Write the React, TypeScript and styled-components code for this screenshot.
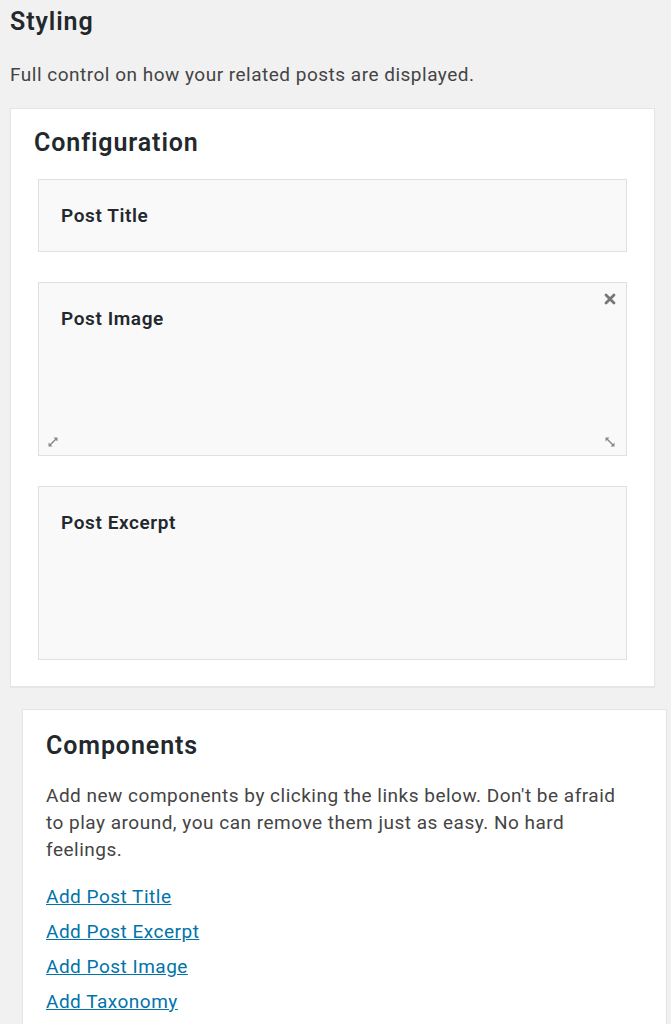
import React from "react";
import styled, { createGlobalStyle } from "styled-components";

const Global = createGlobalStyle`
  html, body { margin: 0; padding: 0; background: #f1f1f1; }
  body { font-family: Roboto, "Noto Sans", "Liberation Sans", sans-serif; color: #444; }
`;

const Page = styled.div`
  padding: 7px 16px 0 10px;
  display: flex;
  flex-direction: column;
`;

const PageTitle = styled.h2`
  margin: 0;
  font-size: 25px;
  font-weight: 600;
  letter-spacing: 0.9px;
  color: #23282d;
  line-height: 30px;
`;

const Lead = styled.p`
  margin: 25px 0 0;
  font-size: 19px;
  letter-spacing: 0.5px;
  line-height: 26px;
  color: #444;
`;

const Panel = styled.section<{ $shift?: number }>`
  background: #fff;
  border: 1px solid #e5e5e5;
  box-shadow: 0 1px 1px rgba(0, 0, 0, 0.04);
  margin-left: ${(p) => p.$shift ?? 0}px;
  margin-right: ${(p) => (p.$shift ? -p.$shift : 0)}px;
`;

const ConfigPanel = styled(Panel)`
  margin-top: 20px;
  padding: 19px 27px 26px 23px;
  display: flex;
  flex-direction: column;
  gap: 30px;
`;

const PanelTitle = styled.h3`
  margin: 0;
  font-size: 25px;
  font-weight: 600;
  letter-spacing: 0.9px;
  color: #23282d;
  line-height: 30px;
`;

const ConfigTitle = styled(PanelTitle)`
  margin-bottom: -9px;
`;

const Block = styled.div<{ $h: number }>`
  position: relative;
  height: ${(p) => p.$h}px;
  margin-left: 4px;
  background: #f9f9f9;
  border: 1px solid #e0e0e0;
  padding: 22px 22px 0;
  box-sizing: border-box;
`;

const BlockLabel = styled.div`
  font-size: 19px;
  font-weight: 600;
  letter-spacing: 0.6px;
  color: #23282d;
  line-height: 28px;
`;

const Corner = styled.span<{ $pos: "tr" | "bl" | "br" }>`
  position: absolute;
  width: 12px;
  height: 12px;
  display: flex;
  ${(p) => (p.$pos === "tr" ? "top: 10px; right: 10px;" : "")}
  ${(p) => (p.$pos === "bl" ? "bottom: 7px; left: 8px;" : "")}
  ${(p) => (p.$pos === "br" ? "bottom: 7px; right: 10px;" : "")}
`;

const ComponentsPanel = styled(Panel)`
  margin-top: 22px;
  padding: 21px 38px 40px 23px;
  min-height: 340px;
`;

const Body = styled.p`
  margin: 21px 0 0;
  font-size: 19px;
  letter-spacing: 0.5px;
  line-height: 27px;
  color: #444;
`;

const Links = styled.div`
  margin-top: 20px;
  display: flex;
  flex-direction: column;
  gap: 7px;
`;

const AddLink = styled.a`
  font-size: 19px;
  letter-spacing: 0.5px;
  line-height: 28px;
  color: #0073aa;
  text-decoration: underline;
  cursor: pointer;
  align-self: flex-start;
`;

const CloseIcon = () => (
  <svg width="12" height="12" viewBox="0 0 12 12">
    <path d="M2 2 L10 10 M10 2 L2 10" stroke="#777" strokeWidth="2.8" strokeLinecap="round" />
  </svg>
);

const ResizeIcon = ({ flip }: { flip?: boolean }) => (
  <svg width="12" height="12" viewBox="0 0 12 12" style={flip ? { transform: "scaleX(-1)" } : undefined}>
    <path d="M3 9 L9 3" stroke="#888" strokeWidth="1.4" />
    <path d="M1.5 10.5 L1.5 6.5 L5.5 10.5 Z" fill="#888" />
    <path d="M10.5 1.5 L10.5 5.5 L6.5 1.5 Z" fill="#888" />
  </svg>
);

export default function App() {
  return (
    <>
      <Global />
      <Page>
        <PageTitle>Styling</PageTitle>
        <Lead>Full control on how your related posts are displayed.</Lead>
        <ConfigPanel>
          <ConfigTitle>Configuration</ConfigTitle>
          <Block $h={73}>
            <BlockLabel>Post Title</BlockLabel>
          </Block>
          <Block $h={174}>
            <BlockLabel>Post Image</BlockLabel>
            <Corner $pos="tr"><CloseIcon /></Corner>
            <Corner $pos="bl"><ResizeIcon /></Corner>
            <Corner $pos="br"><ResizeIcon flip /></Corner>
          </Block>
          <Block $h={174}>
            <BlockLabel>Post Excerpt</BlockLabel>
          </Block>
        </ConfigPanel>
        <ComponentsPanel $shift={12}>
          <PanelTitle>Components</PanelTitle>
          <Body>
            Add new components by clicking the links below. Don't be afraid to play around, you can remove them just as easy. No hard feelings.
          </Body>
          <Links>
            <AddLink>Add Post Title</AddLink>
            <AddLink>Add Post Excerpt</AddLink>
            <AddLink>Add Post Image</AddLink>
            <AddLink>Add Taxonomy</AddLink>
          </Links>
        </ComponentsPanel>
      </Page>
    </>
  );
}
